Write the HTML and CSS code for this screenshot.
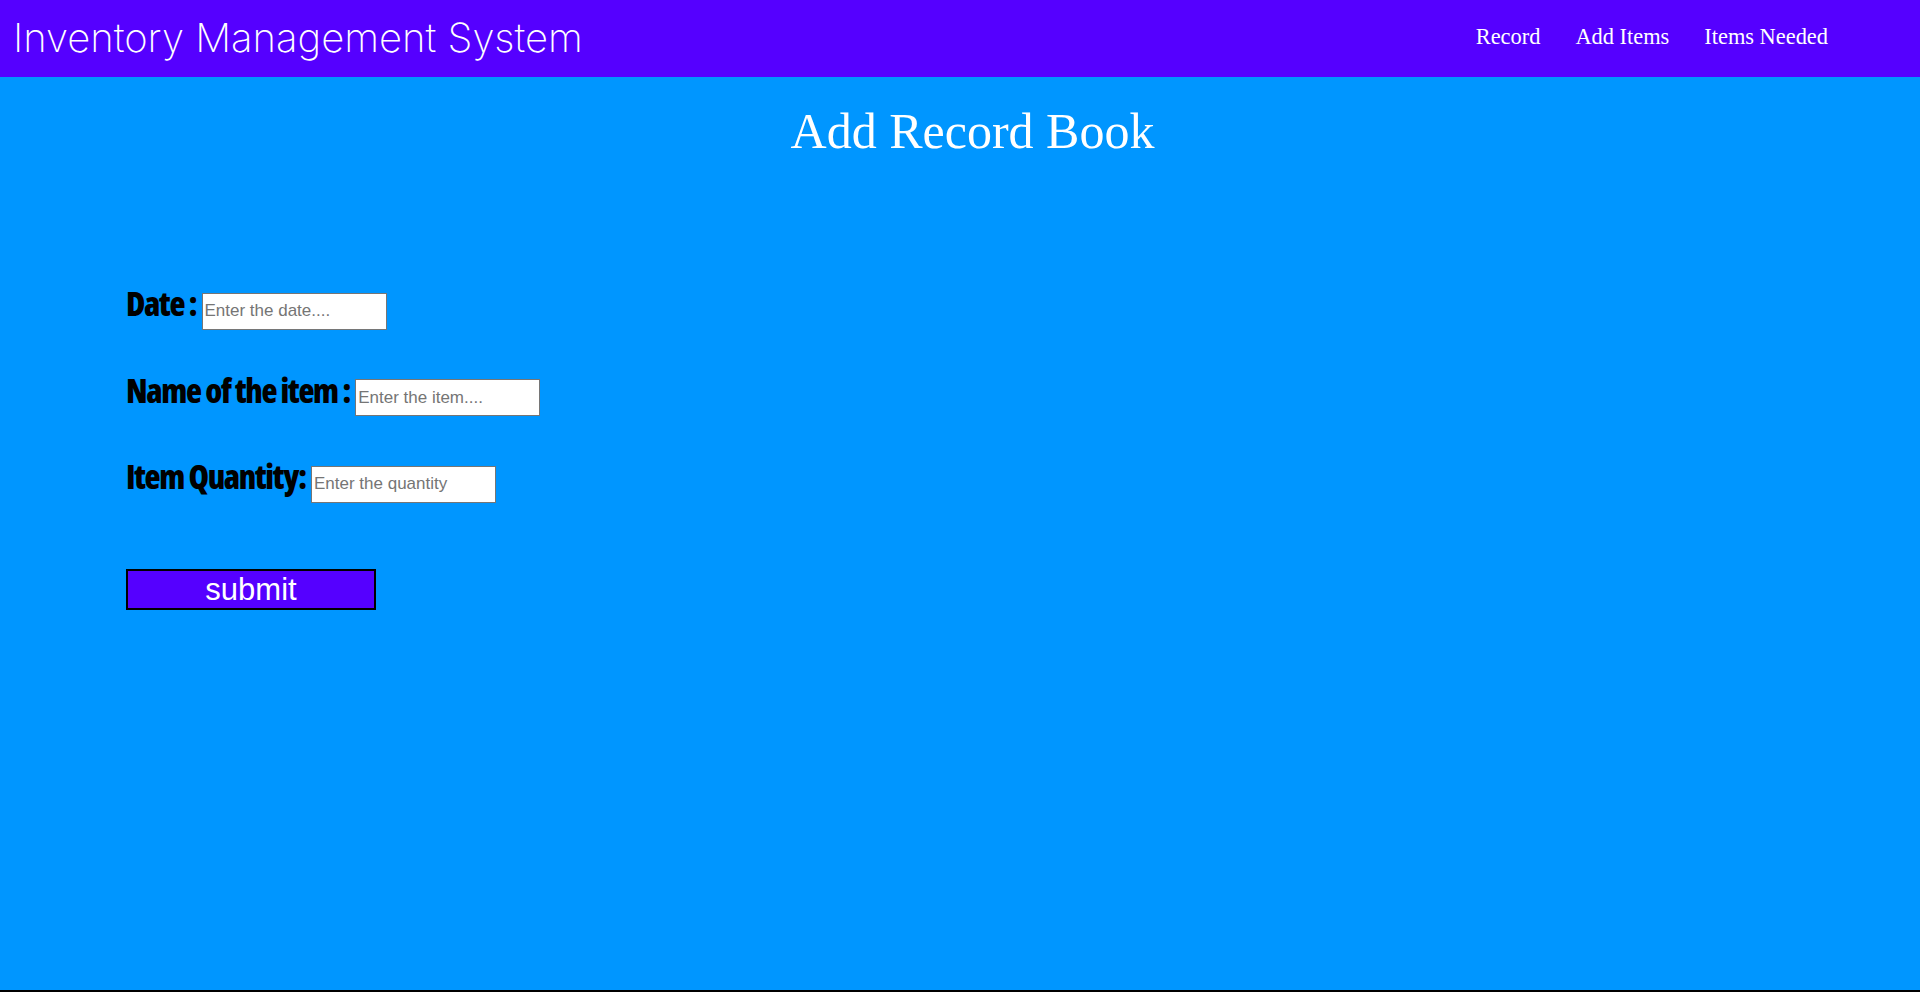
FILE: index.html
```html
<!DOCTYPE html>
<html>
<head>
<meta charset="utf-8">
<title>Inventory Management System</title>
<link rel="stylesheet" href="styles.css">
</head>
<body>
<div class="page">
  <header class="topbar">
    <div class="brand">Inventory Management System</div>
    <nav class="nav">
      <a href="#">Record</a>
      <a href="#">Add Items</a>
      <a href="#">Items Needed</a>
    </nav>
  </header>
  <main class="main">
    <h1 class="title">Add Record Book</h1>
    <form class="form">
      <div class="row">
        <label class="lbl">Date :</label>
        <input class="field" type="text" placeholder="Enter the date....">
      </div>
      <div class="row">
        <label class="lbl">Name of the item :</label>
        <input class="field" type="text" placeholder="Enter the item....">
      </div>
      <div class="row">
        <label class="lbl">Item Quantity:</label>
        <input class="field" type="text" placeholder="Enter the quantity">
      </div>
      <button class="submit" type="button">submit</button>
    </form>
  </main>
</div>
</body>
</html>
```
FILE: styles.css
```css
html, body {
  margin: 0;
  padding: 0;
}
body {
  background: #0096ff;
  font-family: "Liberation Serif", "Times New Roman", serif;
}
.page {
  height: 990px;
  border-bottom: 2px solid #000;
  background: #0096ff;
  display: flex;
  flex-direction: column;
}
.topbar {
  height: 77px;
  background: #5500ff;
  display: flex;
  align-items: center;
  padding: 0 92px 0 13px;
}
.brand {
  font-family: Inter, "Noto Sans", sans-serif;
  font-weight: 200;
  font-size: 40px;
  color: #fff;
  flex: 1;
  margin-top: -3px;
}
.nav {
  display: flex;
  gap: 35px;
  margin-top: -4px;
}
.nav a {
  color: #fff;
  text-decoration: none;
  font-size: 22.4px;
}
.main {
  padding-top: 25px;
}
.title {
  margin: 0;
  text-align: center;
  font-weight: normal;
  font-size: 50px;
  color: #fff;
  padding-left: 25px;
}
.form {
  margin: 127px 0 0 126px;
  display: flex;
  flex-direction: column;
  align-items: flex-start;
}
.row {
  display: flex;
  align-items: baseline;
  gap: 5px;
  margin-bottom: 44px;
}
.lbl {
  font-family: "Open Sans", "DejaVu Sans Condensed", sans-serif;
  font-weight: 800;
  font-stretch: 75%;
  font-size: 33px;
  letter-spacing: -1.3px;
  line-height: 1;
  color: #000;
}
.field {
  box-sizing: border-box;
  width: 185px;
  height: 37px;
  border: 1px solid #767676;
  padding: 1px 2px;
  font-family: "Liberation Sans", Arial, sans-serif;
  font-size: 17px;
  background: #fff;
}
.field::placeholder {
  color: #757575;
}
.submit {
  margin-top: 22px;
  box-sizing: border-box;
  width: 250px;
  height: 41px;
  border: 2px solid #000;
  background: #5500ff;
  color: #fff;
  font-family: "Liberation Sans", Arial, sans-serif;
  font-size: 31px;
  padding: 0;
  line-height: 1;
}
```
